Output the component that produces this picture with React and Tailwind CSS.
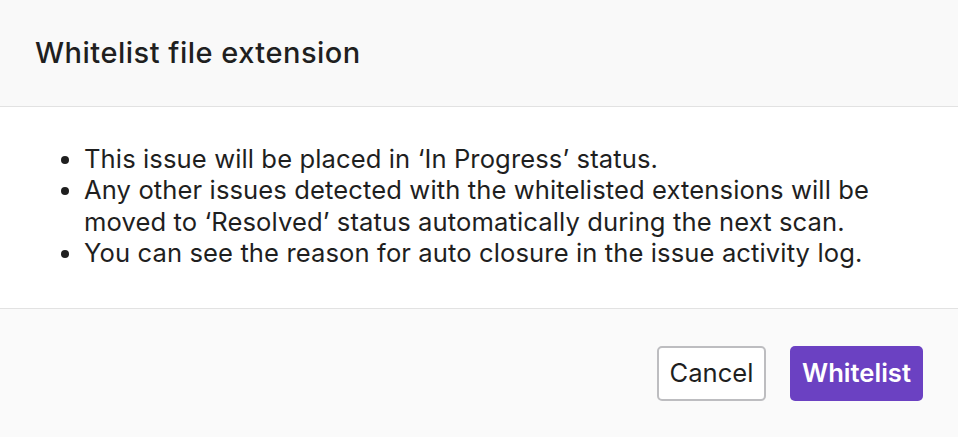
export default function App() {
  return (
    <div
      className="w-[958px] h-[437px] bg-white flex flex-col text-[#1f1f1f]"
      style={{ fontFamily: 'Inter, "Noto Sans", sans-serif' }}
    >
      <div className="h-[107px] shrink-0 bg-[#f9f9f9] border-b border-[#e2e2e2] flex items-center px-[35px]">
        <h2 className="text-[29px] font-medium tracking-[0.5px] leading-[42px]">Whitelist file extension</h2>
      </div>

      <div className="h-[202px] shrink-0 bg-white border-b border-[#e2e2e2] pt-[36px] px-[36px]">
        <ul className="list-disc pl-[48px] text-[25.6px] leading-[31.3px] tracking-[0.1px]">
          <li>This issue will be placed in ‘In Progress’ status.</li>
          <li>
            Any other issues detected with the whitelisted extensions will be
            <br />
            moved to ‘Resolved’ status automatically during the next scan.
          </li>
          <li>You can see the reason for auto closure in the issue activity log.</li>
        </ul>
      </div>

      <div className="flex-1 bg-[#fafafa] flex items-start justify-end gap-[24px] pt-[37px] pr-[35px]">
        <button className="h-[55px] w-[109px] rounded-[5px] border-2 border-[#bdbdc0] bg-white text-[25.6px] text-[#1f1f1f]">
          Cancel
        </button>
        <button className="h-[55px] w-[133px] rounded-[5px] bg-[#6b41c2] text-[25.6px] font-semibold text-white">
          Whitelist
        </button>
      </div>
    </div>
  );
}
